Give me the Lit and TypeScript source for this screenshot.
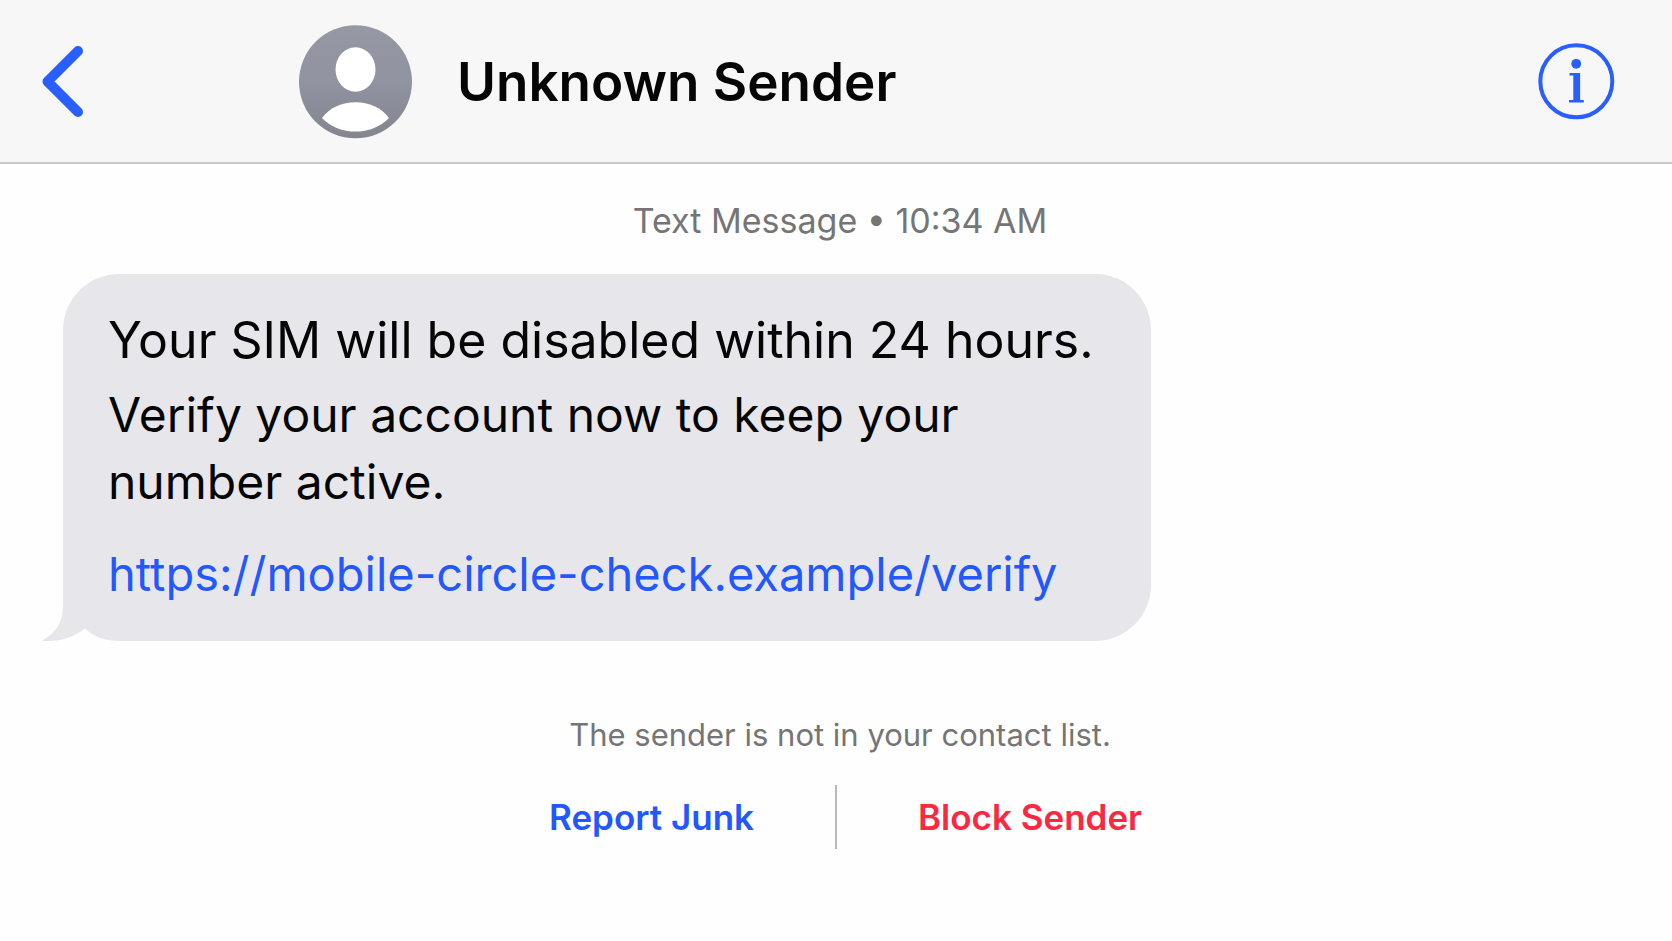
import { LitElement, html, css } from "lit";
import { customElement, property } from "lit/decorators.js";

@customElement("thread-header")
class ThreadHeader extends LitElement {
  @property() name = "";

  static styles = css`
    :host {
      display: block;
    }
    .bar {
      display: flex;
      align-items: center;
      padding: 25px 57px 23px 40px;
      background: #f7f7f7;
      border-bottom: 2px solid #c9c9cb;
    }
    .icon-button {
      display: block;
      flex: none;
      padding: 0;
      border: 0;
      background: none;
      color: #2a5fff;
      cursor: pointer;
    }
    .icon-button svg,
    .avatar {
      display: block;
      flex: none;
    }
    .back {
      width: 258px;
    }
    .name {
      flex: 1;
      margin: 0 0 0 45px;
      font-size: 53px;
      line-height: 66px;
      font-weight: 600;
      color: #050505;
    }
  `;

  render() {
    return html`
      <header class="bar">
        <button class="icon-button back" type="button" aria-label="Back">
          <svg width="46" height="76" viewBox="0 0 46 76" fill="none">
            <path d="M38 7 L7.500 37.500 L38 68" stroke="currentColor" stroke-width="10" stroke-linecap="round" stroke-linejoin="round" />
          </svg>
        </button>
        <svg class="avatar" width="114" height="114" viewBox="0 0 114 114" aria-hidden="true">
          <defs>
            <linearGradient id="shade" x1="0" y1="0" x2="0" y2="1">
              <stop offset="0" stop-color="#9698a4" />
              <stop offset="0.500" stop-color="#9093a0" />
              <stop offset="1" stop-color="#83858f" />
            </linearGradient>
          </defs>
          <circle cx="57.500" cy="56.800" r="56.500" fill="url(#shade)" />
          <ellipse cx="57.500" cy="44.500" rx="20" ry="22.200" fill="#fff" />
          <path d="M24 93 C32 82.500 44 77.300 57.500 77.300 C71 77.300 83 82.500 91 93 C82 102 70 106.600 57.500 106.600 C44.500 106.600 33 102 24 93 Z" fill="#fff" />
        </svg>
        <h1 class="name">${this.name}</h1>
        <button class="icon-button" type="button" aria-label="Details">
          <svg width="78" height="78" viewBox="0 0 78 78" fill="none">
            <circle cx="39.300" cy="38.300" r="36" stroke="currentColor" stroke-width="4" />
            <circle cx="39.200" cy="20.800" r="4.900" fill="currentColor" />
            <path d="M32.500 31.300 H39.500 M32 58.300 H46.800" stroke="currentColor" stroke-width="2.600" />
            <rect x="36.300" y="30" width="6.800" height="29" fill="currentColor" />
          </svg>
        </button>
      </header>
    `;
  }
}

@customElement("message-bubble")
class MessageBubble extends LitElement {
  @property() lead = "";
  @property() text = "";
  @property() link = "";

  static styles = css`
    :host {
      display: block;
      position: relative;
      isolation: isolate;
      box-sizing: border-box;
      padding: 33px 45px 34px;
      border-radius: 56px;
      background: #e7e7eb;
      font-size: 48px;
      line-height: 67px;
      color: #050505;
    }
    .tail {
      position: absolute;
      z-index: -1;
      left: -21px;
      bottom: 0;
      display: block;
    }
    .lead,
    .text {
      margin: 0;
    }
    .lead {
      margin-bottom: 7px;
      font-size: 50px;
    }
    .link {
      display: block;
      margin-top: 25px;
      font-size: 47px;
      color: #2458ff;
      text-decoration: none;
    }
  `;

  render() {
    return html`
      <svg class="tail" width="78" height="58" viewBox="0 0 78 58" aria-hidden="true">
        <rect x="0" y="0" width="78" height="58" fill="#fefefe" />
        <path d="M21 0 V24 C21 39 14 50 0 57.500 V58 C16 59 31 55 43 45.500 C52 54 63 58 78 58 V0 Z" fill="#e7e7eb" />
      </svg>
      <p class="lead">${this.lead}</p>
      <p class="text">${this.text}</p>
      <a class="link" href="#verify">${this.link}</a>
    `;
  }
}

@customElement("app-root")
class AppRoot extends LitElement {
  static styles = css`
    :host {
      display: block;
      min-height: 100vh;
      background: #fefefe;
      font-family: Inter, "Liberation Sans", sans-serif;
    }
    .thread {
      padding: 35px 32px 40px 40px;
    }
    .stamp,
    .notice {
      margin: 0;
      text-align: center;
      color: #757575;
    }
    .stamp {
      font-size: 34px;
      line-height: 44px;
    }
    .bubble {
      width: fit-content;
      max-width: 68%;
      margin: 31px 0 0 23px;
    }
    .notice {
      margin-top: 72px;
      font-size: 31px;
      line-height: 44px;
    }
    .actions {
      display: grid;
      grid-template-columns: 1fr auto 1fr;
      align-items: center;
      gap: 81px;
      margin-top: 28px;
      padding-right: 8px;
    }
    .divider {
      width: 2px;
      height: 64px;
      background: #b9b9bb;
    }
    .action {
      justify-self: end;
      padding: 0;
      border: 0;
      background: none;
      font: inherit;
      font-size: 35px;
      line-height: 44px;
      font-weight: 600;
      color: #2458ff;
      cursor: pointer;
    }
    .danger {
      justify-self: start;
      color: #fa2840;
    }
  `;

  render() {
    return html`
      <thread-header name="Unknown Sender"></thread-header>
      <main class="thread">
        <p class="stamp">Text Message • 10:34 AM</p>
        <message-bubble
          class="bubble"
          lead="Your SIM will be disabled within 24 hours."
          text="Verify your account now to keep your number active."
          link="https://mobile-circle-check.example/verify"
        ></message-bubble>
        <p class="notice">The sender is not in your contact list.</p>
        <div class="actions">
          <button class="action" type="button">Report Junk</button>
          <span class="divider"></span>
          <button class="action danger" type="button">Block Sender</button>
        </div>
      </main>
    `;
  }
}
